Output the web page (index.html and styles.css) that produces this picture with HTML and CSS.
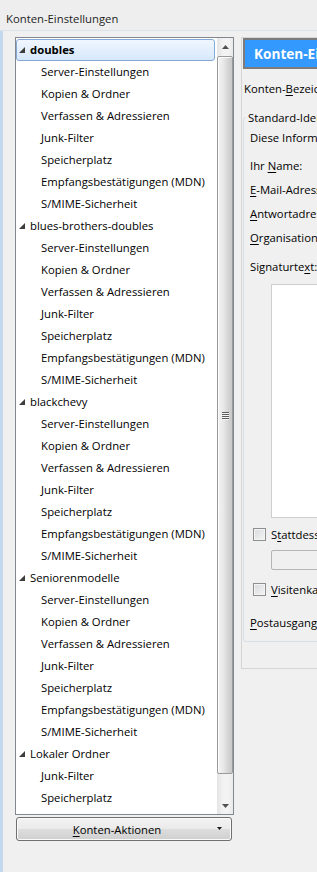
FILE: index.html
```html
<!DOCTYPE html>
<html lang="de">
  <head>
    <meta charset="UTF-8" />
    <title>Konten-Einstellungen</title>
    <link rel="stylesheet" href="styles.css">
  </head>
  <body>
    <div class="titlebar">Konten-Einstellungen</div>

    <div class="window-body">
      <div class="sidebar">
        <div class="tree">
          <ul class="tree-list">
            <li class="row account selected"><svg class="twisty" width="6" height="6"><path d="M6 0V6H0Z" /></svg>doubles</li>
            <li class="row item">Server-Einstellungen</li>
            <li class="row item">Kopien &amp; Ordner</li>
            <li class="row item">Verfassen &amp; Adressieren</li>
            <li class="row item">Junk-Filter</li>
            <li class="row item">Speicherplatz</li>
            <li class="row item">Empfangsbestätigungen (MDN)</li>
            <li class="row item">S/MIME-Sicherheit</li>

            <li class="row account"><svg class="twisty" width="6" height="6"><path d="M6 0V6H0Z" /></svg>blues-brothers-doubles</li>
            <li class="row item">Server-Einstellungen</li>
            <li class="row item">Kopien &amp; Ordner</li>
            <li class="row item">Verfassen &amp; Adressieren</li>
            <li class="row item">Junk-Filter</li>
            <li class="row item">Speicherplatz</li>
            <li class="row item">Empfangsbestätigungen (MDN)</li>
            <li class="row item">S/MIME-Sicherheit</li>

            <li class="row account"><svg class="twisty" width="6" height="6"><path d="M6 0V6H0Z" /></svg>blackchevy</li>
            <li class="row item">Server-Einstellungen</li>
            <li class="row item">Kopien &amp; Ordner</li>
            <li class="row item">Verfassen &amp; Adressieren</li>
            <li class="row item">Junk-Filter</li>
            <li class="row item">Speicherplatz</li>
            <li class="row item">Empfangsbestätigungen (MDN)</li>
            <li class="row item">S/MIME-Sicherheit</li>

            <li class="row account"><svg class="twisty" width="6" height="6"><path d="M6 0V6H0Z" /></svg>Seniorenmodelle</li>
            <li class="row item">Server-Einstellungen</li>
            <li class="row item">Kopien &amp; Ordner</li>
            <li class="row item">Verfassen &amp; Adressieren</li>
            <li class="row item">Junk-Filter</li>
            <li class="row item">Speicherplatz</li>
            <li class="row item">Empfangsbestätigungen (MDN)</li>
            <li class="row item">S/MIME-Sicherheit</li>

            <li class="row account"><svg class="twisty" width="6" height="6"><path d="M6 0V6H0Z" /></svg>Lokaler Ordner</li>
            <li class="row item">Junk-Filter</li>
            <li class="row item">Speicherplatz</li>
          </ul>

          <div class="scrollbar">
            <div class="scroll-btn"><svg width="7" height="4"><path d="M0 4L3.5 0L7 4Z" /></svg></div>
            <div class="thumb">
              <div class="grip"></div>
            </div>
            <div class="scroll-btn down"><svg width="7" height="4"><path d="M0 0L7 0L3.5 4Z" /></svg></div>
          </div>
        </div>

        <button class="actions" type="button">
          <span class="actions-label"><u>K</u>onten-Aktionen</span>
          <span class="actions-arrow"><svg width="5" height="3"><path d="M0 0H5L2.5 3Z" /></svg></span>
        </button>
      </div>

      <div class="panel">
        <div class="panel-header">Konten-Einstellungen - &lt;doubles&gt;</div>

        <div class="line account-name">Konten-<u>B</u>ezeichnung:</div>

        <fieldset class="identity">
          <legend>Standard-Identität</legend>
          <div class="line">Diese Informationen erhalten die Empfänger Ihrer Nachrichten.</div>

          <div class="field-row first">Ihr <u>N</u>ame:</div>
          <div class="field-row"><u>E</u>-Mail-Adresse:</div>
          <div class="field-row"><u>A</u>ntwortadresse:</div>
          <div class="field-row"><u>O</u>rganisation:</div>

          <div class="line sig-label">Signaturte<u>x</u>t:</div>
          <div class="signature"></div>

          <div class="check-row first-check">
            <span class="check"></span>
            <span>S<u>t</u>attdessen eine Datei als Signatur anhängen (Text, HTML oder Grafik):</span>
          </div>
          <div class="file-input"></div>

          <div class="check-row vcard">
            <span class="check"></span>
            <span><u>V</u>isitenkarte an Nachrichten anhängen</span>
          </div>

          <div class="smtp-row"><u>P</u>ostausgangs-Server (SMTP):</div>
        </fieldset>
      </div>
    </div>
  </body>
</html>
```

FILE: styles.css
```css
* {
  box-sizing: border-box;
}

html,
body {
  margin: 0;
  height: 100%;
}

body {
  font-family: "Open Sans", "Noto Sans", sans-serif;
  font-size: 11.3px;
  color: #000;
  background: #f0f0f0;
  overflow: hidden;
}

u {
  text-decoration-thickness: 1px;
  text-underline-offset: 2px;
}

.titlebar {
  height: 31px;
  padding: 11px 0 0 6px;
  line-height: 16px;
  color: #1e1e1e;
  background: #eeeeee;
  border-bottom: 1px solid #dde3ea;
}

.window-body {
  display: flex;
  height: calc(100% - 31px);
  padding: 6px 0 0 12px;
  border-left: 3px solid #c3d7ed;
}

/* account tree */
.sidebar {
  flex: none;
  width: 219px;
  display: flex;
  flex-direction: column;
}

.tree {
  display: flex;
  height: 778px;
  border: 1px solid #828790;
  background: #fff;
}

.tree-list {
  flex: 1;
  list-style: none;
  margin: 0;
  padding: 1px 0 0 0;
  overflow: hidden;
}

.row {
  display: flex;
  align-items: center;
  height: 22px;
  margin-right: 2px;
  padding-bottom: 2px;
  border: 1px solid transparent;
  border-radius: 3px;
  white-space: nowrap;
}

.account {
  padding-left: 2px;
}

.item {
  padding-left: 24px;
}

.twisty {
  flex: none;
  margin: 2px 5px 0 0;
  fill: #3c3c3c;
}

.selected {
  font-weight: bold;
  border-color: #84a9d6;
  background: linear-gradient(#f0f6fe, #d7e8fb);
}

.scrollbar {
  flex: none;
  width: 16px;
  display: flex;
  flex-direction: column;
  background: linear-gradient(90deg, #e4e4e4, #f3f3f3 40%, #f3f3f3 70%, #e9e9e9);
}

.scroll-btn {
  height: 17px;
  display: flex;
  align-items: center;
  justify-content: center;
}

.scroll-btn svg {
  fill: #505050;
}

.scroll-btn.down {
  margin-top: auto;
}

.thumb {
  height: 718px;
  margin-top: 1px;
  border: 1px solid #9a9a9a;
  border-radius: 2px;
  background: linear-gradient(90deg, #f3f3f3, #eaeaea 35%, #d3d3d3 75%, #c9c9c9);
  box-shadow: inset 1px 1px 0 #fcfcfc;
  display: flex;
  justify-content: center;
  padding-top: 355px;
}

.grip {
  width: 7px;
  height: 8px;
  background: repeating-linear-gradient(#5f5f5f 0, #5f5f5f 1px, #f6f6f6 1px, #f6f6f6 2px);
}

.actions {
  display: flex;
  align-items: center;
  width: 216px;
  height: 24px;
  margin: 2px 0 0 1px;
  padding: 0;
  font: inherit;
  color: #000;
  border: 1px solid #707070;
  border-radius: 3px;
  background: linear-gradient(#f2f2f2, #ebebeb 48%, #dddddd 52%, #cfcfcf);
  box-shadow: inset 0 0 0 1px #fafafa;
}

.actions-label {
  flex: 1;
  text-align: center;
}

.actions-arrow {
  flex: none;
  width: 14px;
  display: flex;
  align-items: center;
  padding-bottom: 1px;
}

.actions-arrow svg {
  fill: #1a1a1a;
}

/* settings panel */
.panel {
  flex: none;
  width: 520px;
  height: 632px;
  margin-left: 7px;
  padding: 0 0 0 1px;
  border: 1px solid #d6d6d6;
  background: #f0f0f0;
}

.panel-header {
  height: 31px;
  padding-left: 9px;
  line-height: 27px;
  font-size: 13.6px;
  font-weight: bold;
  color: #fff;
  white-space: nowrap;
  background: #3399ff;
  border: 2px solid #7c7c7c;
}

.line {
  line-height: 15px;
  white-space: nowrap;
}

.account-name {
  margin: 12px 0 0 1px;
}

.identity {
  margin: 14px 8px 0 0;
  padding: 0 6px 7px 6px;
  border: 1px solid #d5dfe5;
  border-radius: 3px;
  min-width: 0;
}

.identity legend {
  margin-left: -4px;
  padding: 0 2px;
  line-height: 15px;
}

.identity > .line:first-of-type {
  margin-top: 5px;
}

.field-row {
  height: 24px;
  line-height: 24px;
  white-space: nowrap;
}

.field-row.first {
  margin-top: 9px;
}

.sig-label {
  margin-top: 9px;
}

.signature {
  height: 234px;
  margin: 10px 0 0 21px;
  background: #fff;
  border: 1px solid #cfcfcf;
}

.check-row {
  display: flex;
  align-items: center;
  gap: 5px;
  height: 16px;
  padding-left: 3px;
  white-space: nowrap;
}

.first-check {
  margin-top: 8px;
}

.vcard {
  margin-top: 11px;
}

.check {
  flex: none;
  width: 13px;
  height: 13px;
  border: 1px solid #8e8f8f;
  background: linear-gradient(135deg, #d9dbdf, #f4f4f4);
  box-shadow: inset 0 0 0 1px #f4f4f4;
}

.file-input {
  height: 20px;
  margin: 8px 0 0 21px;
  border: 1px solid #b5b5b5;
  border-radius: 2px;
  background: #f0f0f0;
}

.smtp-row {
  height: 22px;
  margin-top: 15px;
  line-height: 22px;
  white-space: nowrap;
}
```
